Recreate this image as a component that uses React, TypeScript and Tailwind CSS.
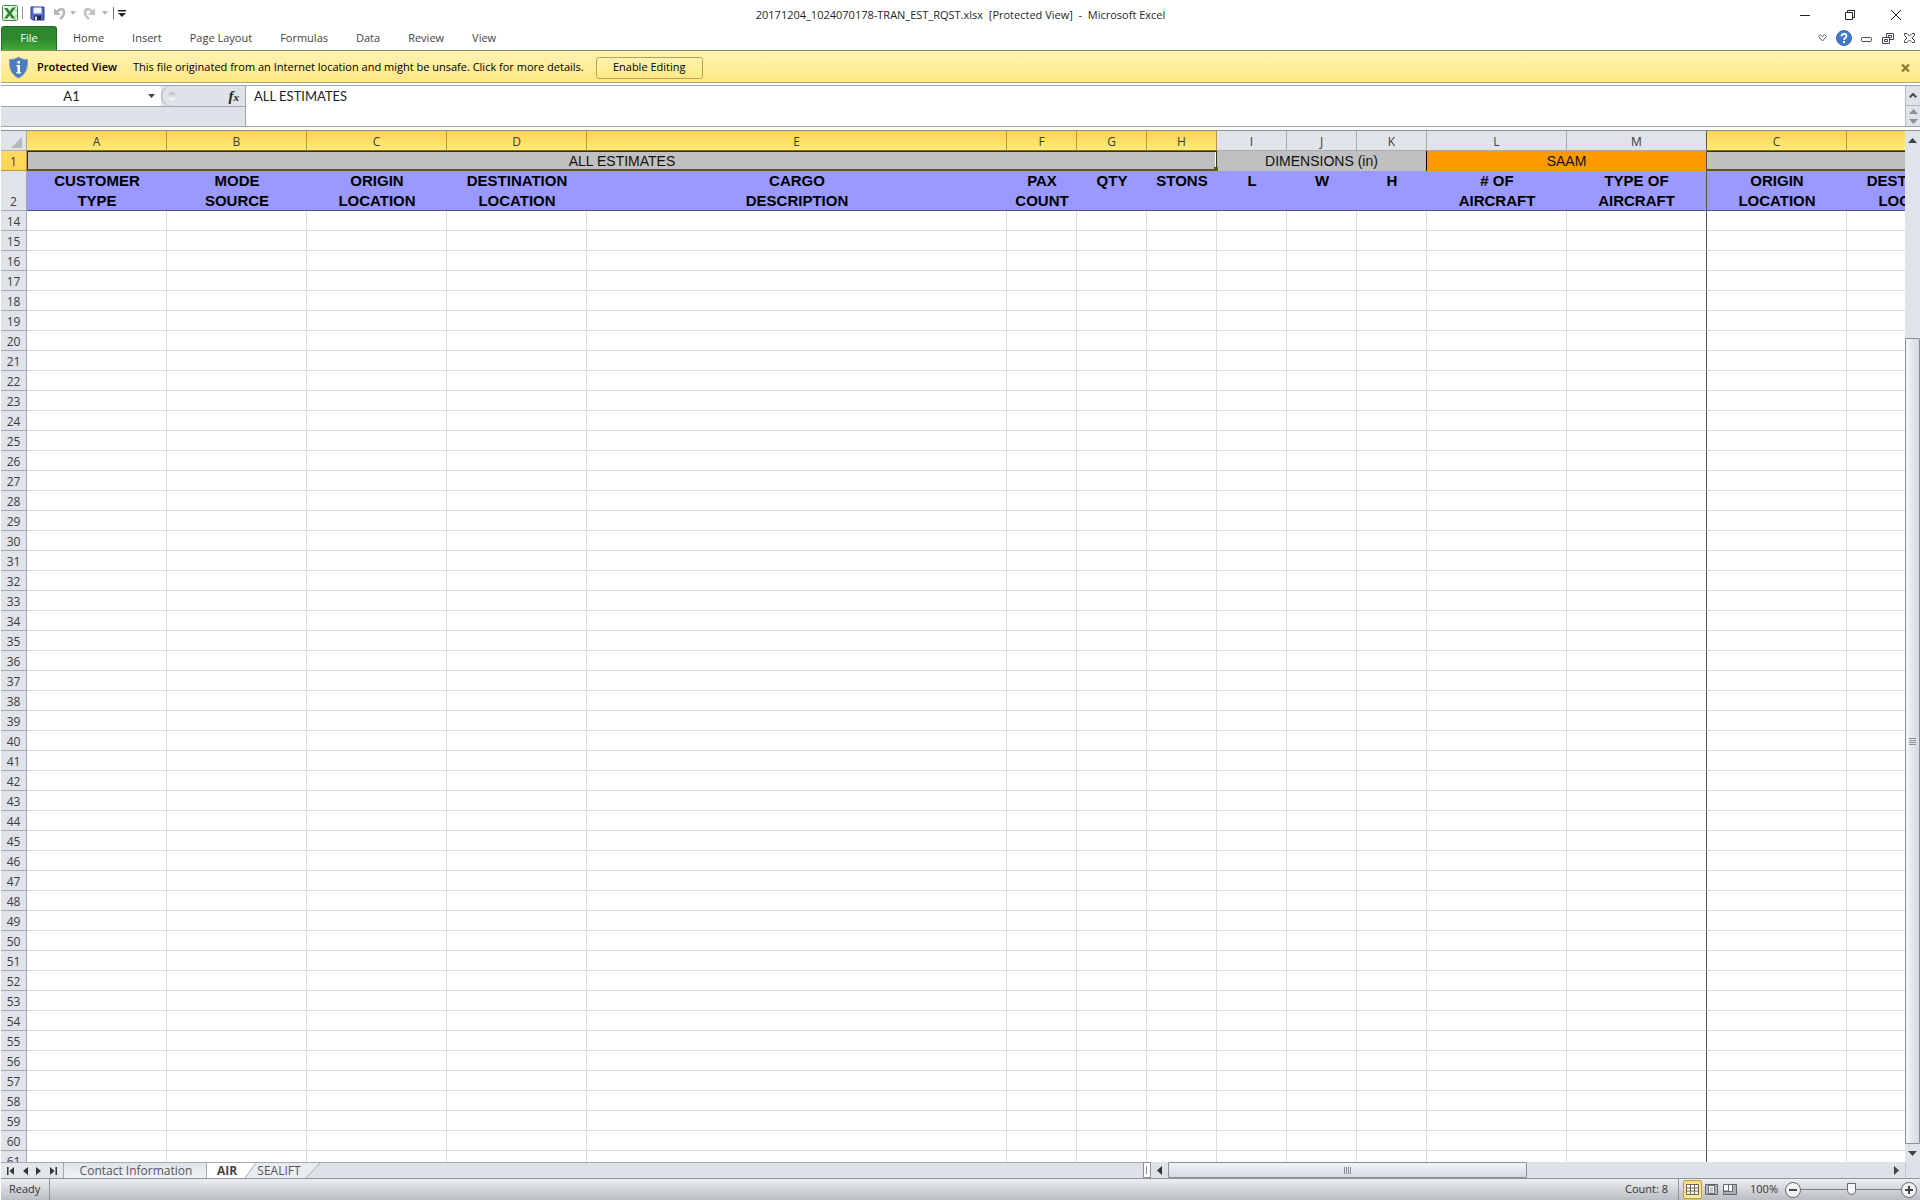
import clsx from "clsx";
import type { ReactNode } from "react";

type Column = { letter: string; width: string; title: string[]; selected?: boolean; freeze?: boolean };

const columns: Column[] = [
  { letter: "A", width: "w-[140px]", title: ["CUSTOMER", "TYPE"], selected: true },
  { letter: "B", width: "w-[140px]", title: ["MODE", "SOURCE"], selected: true },
  { letter: "C", width: "w-[140px]", title: ["ORIGIN", "LOCATION"], selected: true },
  { letter: "D", width: "w-[140px]", title: ["DESTINATION", "LOCATION"], selected: true },
  { letter: "E", width: "w-[420px]", title: ["CARGO", "DESCRIPTION"], selected: true },
  { letter: "F", width: "w-[70px]", title: ["PAX", "COUNT"], selected: true },
  { letter: "G", width: "w-[70px]", title: ["QTY"], selected: true },
  { letter: "H", width: "w-[70px]", title: ["STONS"], selected: true },
  { letter: "I", width: "w-[70px]", title: ["L"] },
  { letter: "J", width: "w-[70px]", title: ["W"] },
  { letter: "K", width: "w-[70px]", title: ["H"] },
  { letter: "L", width: "w-[140px]", title: ["# OF", "AIRCRAFT"] },
  { letter: "M", width: "w-[140px]", title: ["TYPE OF", "AIRCRAFT"], freeze: true },
  { letter: "C", width: "w-[140px]", title: ["ORIGIN", "LOCATION"], selected: true },
  { letter: "D", width: "w-[140px]", title: ["DESTINATION", "LOCATION"], selected: true },
];

const rows = Array.from({ length: 48 }, (_, i) => i + 14);
const menus = ["Home", "Insert", "Page Layout", "Formulas", "Data", "Review", "View"];

function Icon({ w, h, children }: { w: number; h: number; children: ReactNode }) {
  return (
    <svg width={w} height={h} viewBox={`0 0 ${w} ${h}`} fill="none" className="shrink-0" aria-hidden="true">
      {children}
    </svg>
  );
}

function IconButton({ label, className, children }: { label: string; className?: string; children: ReactNode }) {
  return (
    <button type="button" aria-label={label} className={clsx("grid shrink-0 place-items-center", className)}>
      {children}
    </button>
  );
}

function QuickAccess() {
  return (
    <div className="flex items-center">
      <Icon w={17} h={18}>
        <rect x="1.500" y="1.500" width="15" height="15" rx="1" fill="#e9f3e6" stroke="#3c8a3f" />
        <path d="M3 4h3.6l2 3.2L11 4h3.4l-4 5.2 4 5.3h-3.6l-2.2-3.3-2.3 3.3H3l3.9-5.2z" fill="#2b8734" />
        <path d="M11.500 3.500h3.500M12.500 15h2.500M14 6.500h2M14 12h2" stroke="#7fb77f" />
      </Icon>
      <span className="ml-1 h-3 w-px bg-[#8d9299]" />
      <IconButton label="Save" className="ml-1.5 size-4">
        <Icon w={15} h={15}>
          <path d="M1 1h13v13H2.5L1 12.5z" fill="#5a69d0" stroke="#2d368c" />
          <path d="M3.5 1.5h8v6h-8z" fill="#f3f5fc" />
          <path d="M4 9.5h7V14H4z" fill="#20264f" />
          <path d="M5 10.5h2V14H5z" fill="#dfe3f5" />
        </Icon>
      </IconButton>
      <IconButton label="Undo" className="ml-1.5 size-4">
        <Icon w={13} h={13}>
          <path d="M1 1v7h7z" fill="#b4b6b9" />
          <path d="M3.500 5.500C5.500 1.500 10.500 1 11 4.500c.3 3-1 5.500-4 7.500" stroke="#b4b6b9" strokeWidth="2.500" />
        </Icon>
      </IconButton>
      <IconButton label="Undo list" className="size-3">
        <Icon w={6} h={4}><path d="M0 0h6L3 4z" fill="#b4b6b9" /></Icon>
      </IconButton>
      <IconButton label="Redo" className="ml-0.5 size-4">
        <Icon w={13} h={13}>
          <path d="M12 1v7H5z" fill="#bfc1c4" />
          <path d="M9.500 5.500C7.500 1.500 2.500 1 2 4.500c-.3 3 1 5.500 4 7.500" stroke="#bfc1c4" strokeWidth="2.500" />
        </Icon>
      </IconButton>
      <IconButton label="Redo list" className="ml-0.5 size-3">
        <Icon w={6} h={4}><path d="M0 0h6L3 4z" fill="#b4b6b9" /></Icon>
      </IconButton>
      <span className="ml-0.5 h-3 w-px bg-[#6d7076]" />
      <IconButton label="Customize Quick Access Toolbar" className="ml-0.5 size-3">
        <Icon w={8} h={7}><path d="M0 0h8v1.500H0zM0 3h8L4 7z" fill="#222" /></Icon>
      </IconButton>
    </div>
  );
}

function TitleBar() {
  return (
    <header className="grid h-[26px] shrink-0 grid-cols-[1fr_auto_1fr] items-center pl-px">
      <QuickAccess />
      <h1 className="whitespace-pre pt-1 text-[11px] text-[#1f1f1f]">
        {"20171204_1024070178-TRAN_EST_RQST.xlsx  [Protected View]  -  Microsoft Excel"}
      </h1>
      <div className="flex justify-end pt-1">
        <IconButton label="Minimize" className="h-5 w-[45px]">
          <Icon w={10} h={10}><path d="M0 5.500h10" stroke="#222" /></Icon>
        </IconButton>
        <IconButton label="Restore" className="h-5 w-[45px]">
          <Icon w={10} h={10}><path d="M.5 2.500h7v7h-7zM2.500 2.500v-2h7v7h-2" stroke="#222" /></Icon>
        </IconButton>
        <IconButton label="Close" className="h-5 w-12">
          <Icon w={10} h={10}><path d="M0 0l10 10M10 0L0 10" stroke="#222" /></Icon>
        </IconButton>
      </div>
    </header>
  );
}

function RibbonTabs() {
  return (
    <nav className="flex h-6 shrink-0 items-stretch pl-px text-[11px] text-[#444]">
      <button type="button" className="mr-0.5 w-14 rounded-t-[3px] border border-b-0 border-[#1f6b22] bg-linear-to-b from-[#2f8431] via-[#2c8a2c] to-[#47a838] text-white">
        File
      </button>
      {menus.map((m) => (
        <button key={m} type="button" className="px-3.5">{m}</button>
      ))}
      <div className="ml-auto flex items-center">
        <IconButton label="Expand ribbon" className="w-[22px]">
          <Icon w={9} h={8}><path d="M.6 2.500L2.500.6l2 2 2-2 1.900 1.900-3.900 4.500z" stroke="#555b66" /></Icon>
        </IconButton>
        <IconButton label="Help" className="w-[22px]">
          <Icon w={16} h={16}>
            <circle cx="8" cy="8" r="7.500" fill="#4379c9" stroke="#3564ad" />
            <path d="M5.500 6.200C5.600 3 10.500 3 10.500 6c0 2-2.500 2-2.500 4" stroke="#fff" strokeWidth="1.800" />
            <path d="M7 11h2v2H7z" fill="#fff" />
          </Icon>
        </IconButton>
        <IconButton label="Minimize workbook" className="w-[22px] pt-0.5">
          <Icon w={11} h={5}><rect x=".5" y=".5" width="10" height="4" rx="1" stroke="#444a54" /></Icon>
        </IconButton>
        <IconButton label="Restore workbook" className="w-[22px]">
          <Icon w={12} h={11}>
            <path d="M.5 4.500h7v6h-7zM2.500 6.500h3v2h-3zM4.500 4.500v-4h7v6h-4M6.500 4.500v-2h3v2h-2" stroke="#444a54" />
          </Icon>
        </IconButton>
        <IconButton label="Close workbook" className="w-[21px]">
          <Icon w={11} h={10}>
            <path d="M.5.500h2.500l2.500 2.500L8 .500h2.500v2L8 5l2.500 2.500v2H8L5.500 7 3 9.500H.500v-2L3 5 .500 2.500z" stroke="#444a54" />
          </Icon>
        </IconButton>
      </div>
    </nav>
  );
}

function ProtectedBar() {
  return (
    <section className="ml-px flex h-[33px] shrink-0 items-center border-y border-t-[#8f8a68] border-b-[#b3a768] bg-linear-to-b from-[#fff3b5] to-[#ffe883] pt-0.5 text-[11px] text-black">
      <span className="ml-[7px]">
        <Icon w={21} h={23}>
          <path d="M10.500 1C13 3 16 3.500 19.500 3.500 20 12 18 18.500 10.500 22 3 18.500 1 12 1.500 3.500 5 3.500 8 3 10.500 1z" fill="#4a7cc2" stroke="#8d9db5" />
          <path d="M9.500 5h2.500v2.500H9.500zM8.500 9H12v7h1v1.500H8.500V16h1v-5.500h-1z" fill="#fff" />
        </Icon>
      </span>
      <b className="ml-2 font-semibold">Protected View</b>
      <span className="ml-4">This file originated from an Internet location and might be unsafe. Click for more details.</span>
      <button type="button" className="ml-3 h-[22px] w-[107px] rounded-[3px] border border-[#b8a354] bg-linear-to-b from-[#fff2ae] to-[#ffe988]">
        Enable Editing
      </button>
      <IconButton label="Close message bar" className="mr-2.5 ml-auto">
        <Icon w={9} h={8}><path d="M1 .5l7 7M8 .5l-7 7" stroke="#8c7b2c" strokeWidth="2.200" /></Icon>
      </IconButton>
    </section>
  );
}

function FormulaBar() {
  return (
    <section className="mt-0.5 ml-px flex h-[42px] shrink-0 border-y border-[#a0a4ac] bg-[#dfe3e9] text-[#222]">
      <div className="flex h-[21px] w-[244px] items-stretch border-b border-[#a0a4ac]">
        <input aria-label="Name box" defaultValue="A1" className="w-[141px] bg-white pt-0.5 text-center font-['Lato',sans-serif] text-[13px] outline-none" />
        <IconButton label="Name list" className="w-[19px] bg-white">
          <Icon w={7} h={4}><path d="M0 0h7L3.500 4z" fill="#444" /></Icon>
        </IconButton>
        <div className="flex flex-1 items-center justify-between rounded-l-full border-l border-[#a0a4ac] bg-[#dfe3e9] px-1.5">
          <span className="size-2 rounded-full bg-linear-to-b from-[#b5b9c0] to-white" />
          <button type="button" aria-label="Insert function" className="font-['Liberation_Serif',serif] text-[15px] leading-4 font-bold italic">
            f<span className="text-[11px]">x</span>
          </button>
        </div>
      </div>
      <input
        aria-label="Formula bar"
        defaultValue="ALL ESTIMATES"
        className="h-full min-w-0 flex-1 border-l border-[#a0a4ac] bg-white pb-5 pl-2 font-['Lato',sans-serif] text-[13px] outline-none"
      />
      <div className="flex w-[15px] flex-col border-l border-[#b5b9c0]">
        <IconButton label="Scroll formula up" className="h-5 border-b border-[#b5b9c0]">
          <Icon w={8} h={5}><path d="M.8 4.200L4 1l3.200 3.200" stroke="#444" strokeWidth="2" /></Icon>
        </IconButton>
        <IconButton label="Previous line" className="h-2.5">
          <Icon w={9} h={5}><path d="M0 5h9L4.500 0z" fill="#8b9097" /></Icon>
        </IconButton>
        <IconButton label="Next line" className="h-2.5">
          <Icon w={9} h={5}><path d="M0 0h9L4.500 5z" fill="#8b9097" /></Icon>
        </IconButton>
      </div>
    </section>
  );
}

function Sheet() {
  return (
    <div className="min-w-0 flex-1 overflow-hidden bg-white">
      <table className="w-[1986px] table-fixed border-separate border-spacing-0 text-center">
        <colgroup>
          <col className="w-[26px]" />
          {columns.map((c, i) => <col key={i} className={c.width} />)}
        </colgroup>
        <thead className="font-['Liberation_Sans',Arial,sans-serif]">
          <tr className="h-5 font-['Open_Sans',sans-serif] text-[12px] leading-4 text-[#3b3b3b]">
            <th aria-label="Select all" className="border-r border-b border-[#a5aab2] bg-[#e0e4ea] p-0">
              <span className="flex justify-end pt-1 pr-1">
                <Icon w={11} h={11}><path d="M11 0v11H0z" fill="#b4b8be" /></Icon>
              </span>
            </th>
            {columns.map((c, i) => (
              <th
                key={i}
                scope="col"
                className={clsx(
                  "border-r border-b p-0 pt-0.5 font-normal",
                  c.selected ? "border-b-[#8a6a1c] bg-linear-to-b from-[#fdd153] to-[#ffec79]" : "border-b-[#a5aab2] bg-[#e0e4ea]",
                  c.freeze ? "border-r-[#555]" : c.selected ? "border-r-[#c0953a]" : "border-r-[#a5aab2]",
                )}
              >
                {c.letter}
              </th>
            ))}
          </tr>
          <tr className="h-5 text-[14px] leading-4 text-[#111]">
            <th scope="row" className="border-r border-b border-[#c0953a] bg-linear-to-b from-[#ffdb62] to-[#ffd456] p-0 pt-0.5 font-['Open_Sans',sans-serif] text-[12px] font-normal text-[#3b3b3b]">1</th>
            <td colSpan={8} className="relative border border-b-2 border-[#33330f] border-b-[#5c5a12] bg-[#c0c0c0] p-0">
              ALL ESTIMATES
              <span className="absolute top-0 right-0 h-full w-px bg-white" />
              <span className="absolute -right-0.5 -bottom-0.5 size-1 bg-[#5c5a12]" />
            </td>
            <td colSpan={3} className="border-r border-black bg-[#c0c0c0] p-0">DIMENSIONS (in)</td>
            <td colSpan={2} className="border-r border-[#555] bg-[#ff9900] p-0">SAAM</td>
            <td colSpan={2} className="border-t border-b-2 border-t-[#33330f] border-b-[#5c5a12] bg-[#c0c0c0] p-0" />
          </tr>
          <tr className="h-10 bg-[#9999ff] align-top text-[15px] leading-5 text-black">
            <th scope="row" className="border-r border-b border-[#a5aab2] bg-[#e0e4ea] p-0 align-bottom font-['Open_Sans',sans-serif] text-[12px] leading-4 font-normal text-[#3b3b3b]">2</th>
            {columns.map((c, i) => (
              <th key={i} scope="col" className={clsx("border-b border-[#5a5585] p-0", c.freeze && "border-r border-r-[#555]")}>
                <span className="block h-[39px] whitespace-pre">{c.title.join("\n")}</span>
              </th>
            ))}
          </tr>
        </thead>
        <tbody>
          {rows.map((n) => (
            <tr key={n} className="h-5">
              <th scope="row" className="border-r border-b border-[#a5aab2] bg-[#e0e4ea] p-0 pt-0.5 font-['Open_Sans',sans-serif] text-[12px] leading-4 font-normal text-[#3b3b3b]">
                {n}
              </th>
              {columns.map((c, i) => (
                <td key={i} className={clsx("border-r border-b border-b-[#dadcdd] p-0", c.freeze ? "border-r-[#555]" : "border-r-[#dadcdd]")} />
              ))}
            </tr>
          ))}
        </tbody>
      </table>
    </div>
  );
}

function VerticalScroll() {
  return (
    <div className="flex w-[15px] shrink-0 flex-col bg-[#dfe3ea]">
      <IconButton label="Scroll up" className="h-[18px]">
        <Icon w={9} h={5}><path d="M0 5h9L4.500 0z" fill="#444" /></Icon>
      </IconButton>
      <div className="flex min-h-0 flex-1 flex-col justify-end">
        <div className="grid h-[81%] place-items-center rounded-[1px] border border-[#8a8f97] bg-linear-to-r from-[#f3f6f9] to-[#d5d9e2]">
          <Icon w={7} h={7}><path d="M0 .5h7M0 2.500h7M0 4.500h7M0 6.500h7" stroke="#8a8f97" /></Icon>
        </div>
      </div>
      <IconButton label="Scroll down" className="h-[18px]">
        <Icon w={9} h={5}><path d="M0 0h9L4.500 5z" fill="#444" /></Icon>
      </IconButton>
    </div>
  );
}

function SheetTabs() {
  return (
    <div className="ml-px flex h-[17px] shrink-0 border-b border-[#8f949c] bg-[#dde1e8] text-[12px] leading-4 text-[#555]">
      <div className="flex w-[59.5%] border-t border-[#a5aab2]">
        <div className="flex w-[62px] items-center justify-between bg-[#e3e7ec] px-1.5">
          <IconButton label="First sheet"><Icon w={7} h={8}><path d="M0 0h1.500v8H0zM7 0v8L2.500 4z" fill="#333" /></Icon></IconButton>
          <IconButton label="Previous sheet"><Icon w={5} h={8}><path d="M5 0v8L0 4z" fill="#333" /></Icon></IconButton>
          <IconButton label="Next sheet"><Icon w={5} h={8}><path d="M0 0v8l5-4z" fill="#333" /></Icon></IconButton>
          <IconButton label="Last sheet"><Icon w={7} h={8}><path d="M7 0H5.500v8H7zM0 0v8l4.500-4z" fill="#333" /></Icon></IconButton>
        </div>
        <button type="button" className="w-[144px] border-x border-[#a5aab2] bg-linear-to-b from-[#dfe3e9] to-[#f0f3f6] pl-0.5">Contact Information</button>
        <button type="button" className="w-[38px] bg-white pl-0.5 font-bold text-[#444]">AIR</button>
        <button type="button" className="relative w-[76px] pr-2">
          <svg className="absolute inset-0 h-full w-full" viewBox="0 0 76 15" preserveAspectRatio="none" aria-hidden="true">
            <path d="M0 0h11L0 15z" fill="#fff" />
            <path d="M11 0h64L61 15H0z" fill="#e9edf1" />
            <path d="M11 0L0 15M75 0L61 15" stroke="#a5aab2" />
          </svg>
          <span className="relative">SEALIFT</span>
        </button>
      </div>
      <div className="flex flex-1">
        <div className="grid w-2 place-items-center border border-[#8a8f97] bg-white">
          <span className="h-2 w-px bg-[#8a8f97]" />
        </div>
        <IconButton label="Scroll left" className="w-[17px]">
          <Icon w={5} h={9}><path d="M5 0v9L0 4.500z" fill="#333" /></Icon>
        </IconButton>
        <div className="flex-1">
          <div className="grid h-4 w-1/2 place-items-center rounded-[1px] border border-[#8a8f97] bg-linear-to-b from-[#f0f5f9] to-[#d5d9e2]">
            <Icon w={7} h={7}><path d="M.5 0v7M2.500 0v7M4.500 0v7M6.500 0v7" stroke="#8a8f97" /></Icon>
          </div>
        </div>
        <IconButton label="Scroll right" className="w-[18px]">
          <Icon w={5} h={9}><path d="M0 0v9l5-4.500z" fill="#444" /></Icon>
        </IconButton>
      </div>
      <div className="w-[15px] border-l border-[#c3c7cd]" />
    </div>
  );
}

function StatusBar() {
  return (
    <footer className="ml-px flex h-[21px] shrink-0 items-stretch bg-linear-to-b from-[#eceef1] to-[#babdc3] text-[11px] text-[#333]">
      <span className="flex w-[49px] items-center border-r border-[#8f949c] pl-2">Ready</span>
      <span className="ml-auto flex items-center border-r border-[#8f949c] pr-2.5">Count: 8</span>
      <IconButton label="Normal" className="my-px ml-1 w-[19px] rounded-[2px] border border-[#c29b3a] bg-linear-to-b from-[#ffdf7d] to-[#ffe99c]">
        <Icon w={13} h={11}>
          <path d="M.5.500h12v10H.500z" fill="#fff" />
          <path d="M.5.500h12v10H.500zM.5 4h12M.5 7h12M4.500.500v10M8.500.500v10" stroke="#6a6450" />
        </Icon>
      </IconButton>
      <IconButton label="Page layout" className="w-[18px]">
        <Icon w={13} h={11}>
          <path d="M.5.500h12v10H.500z" fill="#b5b9bf" stroke="#63676e" />
          <path d="M3.500 1.500h6v8h-6z" fill="#fff" stroke="#63676e" />
          <path d="M5 4h3M5 6h3M5 8h3" stroke="#8a8f97" />
        </Icon>
      </IconButton>
      <IconButton label="Page break preview" className="w-5">
        <Icon w={14} h={11}>
          <path d="M.5.500h13v10H.500z" fill="#aab0b8" stroke="#63676e" />
          <path d="M1 1h4v5H1zM6 1h3v6H6z" fill="#fff" />
          <path d="M5.500 0v7M9.500 0v7.500H1" stroke="#63676e" />
        </Icon>
      </IconButton>
      <button type="button" className="w-10 pl-2 text-center">100%</button>
      <IconButton label="Zoom out" className="ml-1 w-[17px]">
        <Icon w={16} h={16}>
          <circle cx="8" cy="8" r="7.500" fill="#f2f3f5" stroke="#63676e" />
          <path d="M4 8h8" stroke="#444" strokeWidth="2" />
        </Icon>
      </IconButton>
      <input
        type="range"
        aria-label="Zoom"
        defaultValue={50}
        className="w-[100px] appearance-none bg-transparent [&::-webkit-slider-runnable-track]:h-px [&::-webkit-slider-runnable-track]:bg-[#7b8088] [&::-webkit-slider-thumb]:-mt-1.5 [&::-webkit-slider-thumb]:h-3 [&::-webkit-slider-thumb]:w-[9px] [&::-webkit-slider-thumb]:appearance-none [&::-webkit-slider-thumb]:rounded-b-full [&::-webkit-slider-thumb]:border [&::-webkit-slider-thumb]:border-[#63676e] [&::-webkit-slider-thumb]:bg-[#f4f5f7]"
      />
      <IconButton label="Zoom in" className="mr-[3px] w-4">
        <Icon w={16} h={16}>
          <circle cx="8" cy="8" r="7.500" fill="#f2f3f5" stroke="#63676e" />
          <path d="M4 8h8M8 4v8" stroke="#444" strokeWidth="2" />
        </Icon>
      </IconButton>
    </footer>
  );
}

export default function App() {
  return (
    <div className="flex h-dvh flex-col overflow-hidden bg-white font-['Open_Sans','Noto_Sans',sans-serif]">
      <TitleBar />
      <RibbonTabs />
      <ProtectedBar />
      <FormulaBar />
      <div className="mt-[3px] ml-px flex min-h-0 flex-1 border-t border-[#8a8f97]">
        <Sheet />
        <VerticalScroll />
      </div>
      <SheetTabs />
      <StatusBar />
    </div>
  );
}
